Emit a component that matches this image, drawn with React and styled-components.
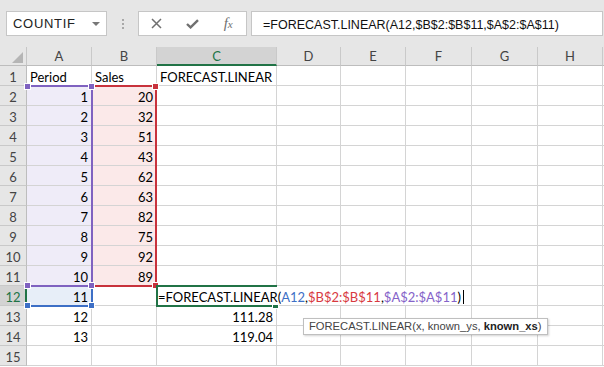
import React from "react";
import styled, { createGlobalStyle } from "styled-components";

const CELL_FONT = `Lato, "Liberation Sans", Arial, sans-serif`;
const UI_FONT = `"Liberation Sans", Arial, sans-serif`;

const GREEN = "#217346";
const PURPLE = "#7f62c0";
const RED = "#c8323c";
const BLUE = "#3d6fc6";

const GlobalStyle = createGlobalStyle`
  html, body {
    margin: 0;
    padding: 0;
    background: #fff;
  }
  body {
    font-family: ${UI_FONT};
  }
`;

const Window = styled.div`
  width: 604px;
  height: 367px;
  overflow: hidden;
  background: #fff;
`;

const Toolbar = styled.div`
  height: 47px;
  box-sizing: border-box;
  background: #e6e6e6;
  display: flex;
  align-items: center;
  padding: 0 1px 0 6px;
`;

const NameBox = styled.div`
  width: 101px;
  height: 25px;
  box-sizing: border-box;
  background: #fff;
  border: 1px solid #c6c6c6;
  display: flex;
  align-items: center;
  justify-content: space-between;
  padding: 0 6px 0 6px;
  font-size: 13px;
  letter-spacing: 0.7px;
  color: #222;
`;

const DropArrow = styled.span`
  width: 0;
  height: 0;
  border-left: 4px solid transparent;
  border-right: 4px solid transparent;
  border-top: 4px solid #777;
`;

const Grip = styled.div`
  width: 31px;
  display: flex;
  flex-direction: column;
  align-items: center;
  gap: 2px;

  span {
    width: 2px;
    height: 2px;
    background: #a8a8a8;
  }
`;

const ButtonGroup = styled.div`
  width: 109px;
  height: 25px;
  box-sizing: border-box;
  background: #fff;
  border: 1px solid #c6c6c6;
  display: flex;
`;

const BarButton = styled.div`
  flex: 1;
  display: flex;
  align-items: center;
  justify-content: center;
  color: #707070;
`;

const Fx = styled.span`
  font-family: "Liberation Serif", serif;
  font-style: italic;
  font-size: 15px;
  color: #707070;

  small {
    font-size: 11px;
  }
`;

const FormulaInput = styled.div`
  flex: 1;
  height: 25px;
  margin-left: 4px;
  box-sizing: border-box;
  background: #fff;
  border: 1px solid #c6c6c6;
  padding: 3px 0 0 11px;
  display: flex;
  align-items: center;
  font-size: 12.5px;
  color: #111;
`;

const Sheet = styled.div`
  position: relative;
  display: grid;
  grid-template-columns: 27px 65px 65px 120px 64px 65px 66px 66px 65px 1fr;
  grid-template-rows: 19px;
  grid-auto-rows: 20px;
  font-family: ${CELL_FONT};
  font-size: 13px;
`;

const Corner = styled.div`
  box-sizing: border-box;
  background: #e6e6e6;
  border-right: 1px solid #c6c6c6;
  border-bottom: 1px solid #bdbdbd;
  display: flex;
  justify-content: flex-end;
  align-items: flex-end;
  padding: 0 3px 2px 0;

  span {
    width: 0;
    height: 0;
    border-left: 11px solid transparent;
    border-bottom: 11px solid #b5b5b5;
  }
`;

const ColHeader = styled.div`
  box-sizing: border-box;
  background: ${(p) => (p.$active ? "#d3d3d3" : "#e6e6e6")};
  color: ${(p) => (p.$active ? GREEN : "#444")};
  border-right: 1px solid #c9c9c9;
  border-bottom: ${(p) => (p.$active ? `2px solid ${GREEN}` : "1px solid #bdbdbd")};
  display: flex;
  align-items: center;
  justify-content: center;
  padding-top: ${(p) => (p.$active ? "2px" : "1px")};
  line-height: 15px;
`;

const RowHeader = styled.div`
  box-sizing: border-box;
  background: ${(p) => (p.$active ? "#d3d3d3" : "#e6e6e6")};
  color: ${(p) => (p.$active ? GREEN : "#444")};
  border-right: ${(p) => (p.$active ? `2px solid ${GREEN}` : "1px solid #bdbdbd")};
  border-bottom: 1px solid #c9c9c9;
  display: flex;
  align-items: flex-end;
  justify-content: center;
  padding-left: ${(p) => (p.$active ? "1px" : "0")};
  line-height: 16px;
`;

const Cell = styled.div`
  box-sizing: border-box;
  background: ${(p) => p.$fill || "#fff"};
  border-right: 1px solid #d4d4d4;
  border-bottom: 1px solid #d4d4d4;
  display: flex;
  align-items: flex-end;
  justify-content: ${(p) => (p.$num ? "flex-end" : "flex-start")};
  padding: 0 3px;
  line-height: 16px;
  color: #000;
  white-space: nowrap;
`;

const Range = styled.div`
  position: absolute;
  box-sizing: border-box;
  left: ${(p) => p.$x}px;
  top: ${(p) => p.$y}px;
  width: ${(p) => p.$w}px;
  height: ${(p) => p.$h}px;
  border: 2px solid ${(p) => p.$color};
  border-left: ${(p) => (p.$openLeft ? "none" : `2px solid ${p.$color}`)};
  pointer-events: none;
`;

const Handle = styled.span`
  position: absolute;
  width: 5px;
  height: 5px;
  background: ${(p) => p.$color};
  box-shadow: 0 0 0 1px #fff;
  ${(p) => (p.$at.includes("t") ? "top: -3px;" : "bottom: -3px;")}
  ${(p) => (p.$at.includes("l") ? "left: -2px;" : "right: -3px;")}
`;

const EditBox = styled.div`
  position: absolute;
  left: 158px;
  top: 240px;
  height: 18px;
  background: #fff;
  display: flex;
  align-items: flex-end;
  line-height: 16px;
  padding-right: 2px;
  white-space: nowrap;
  color: #000;
`;

const Ref = styled.span`
  color: ${(p) => p.$color};
`;

const Caret = styled.span`
  width: 1px;
  height: 14px;
  margin: 0 0 1px 2px;
  background: #000;
`;

const Tooltip = styled.div`
  position: absolute;
  left: 303px;
  top: 271px;
  height: 17px;
  box-sizing: border-box;
  padding: 0 5px;
  background: #fff;
  border: 1px solid #bfbfbf;
  box-shadow: 1px 1px 2px rgba(0, 0, 0, 0.18);
  font-family: ${UI_FONT};
  font-size: 11.2px;
  line-height: 15px;
  color: #444;
  white-space: nowrap;

  b {
    color: #222;
  }
`;

const columns = ["A", "B", "C", "D", "E", "F", "G", "H"];
const sales = [20, 32, 51, 43, 62, 63, 82, 75, 92, 89];

const rows = Array.from({ length: 15 }, (_, i) => {
  const r = i + 1;
  const row = {};
  if (r === 1) {
    row.A = "Period";
    row.B = "Sales";
    row.C = "FORECAST.LINEAR";
  } else if (r <= 11) {
    row.A = r - 1;
    row.B = sales[r - 2];
  } else if (r <= 14) {
    row.A = r - 1;
  }
  if (r === 13) row.C = "111.28";
  if (r === 14) row.C = "119.04";
  return row;
});

const fillFor = (col, r) => {
  if (col === "A" && r >= 2 && r <= 11) return "#efecf8";
  if (col === "B" && r >= 2 && r <= 11) return "#fbe9e9";
  if (col === "A" && r === 12) return "#e7eef8";
  return null;
};

const XIcon = () => (
  <svg width="11" height="11" viewBox="0 0 11 11">
    <path d="M1 1 L10 10 M10 1 L1 10" stroke="#707070" strokeWidth="1.5" fill="none" />
  </svg>
);

const CheckIcon = () => (
  <svg width="13" height="10" viewBox="0 0 13 10">
    <path d="M1 5 L4.6 8.4 L12 1.2" stroke="#707070" strokeWidth="2.4" fill="none" />
  </svg>
);

export default function App() {
  return (
    <Window>
      <GlobalStyle />
      <Toolbar>
        <NameBox>
          COUNTIF
          <DropArrow />
        </NameBox>
        <Grip>
          <span />
          <span />
          <span />
        </Grip>
        <ButtonGroup>
          <BarButton>
            <XIcon />
          </BarButton>
          <BarButton>
            <CheckIcon />
          </BarButton>
          <BarButton>
            <Fx>
              f<small>x</small>
            </Fx>
          </BarButton>
        </ButtonGroup>
        <FormulaInput>=FORECAST.LINEAR(A12,$B$2:$B$11,$A$2:$A$11)</FormulaInput>
      </Toolbar>

      <Sheet>
        <Corner>
          <span />
        </Corner>
        {columns.map((c) => (
          <ColHeader key={c} $active={c === "C"}>
            {c}
          </ColHeader>
        ))}
        <ColHeader />

        {rows.map((row, i) => {
          const r = i + 1;
          return (
            <React.Fragment key={r}>
              <RowHeader $active={r === 12}>{r}</RowHeader>
              {columns.map((c) => (
                <Cell key={c} $fill={fillFor(c, r)} $num={typeof row[c] === "number" || r > 12}>
                  {row[c]}
                </Cell>
              ))}
              <Cell />
            </React.Fragment>
          );
        })}

        <Range $x={92} $y={38} $w={65} $h={202} $color={RED} $openLeft>
          <Handle $at="tr" $color={RED} />
          <Handle $at="br" $color={RED} />
        </Range>
        <Range $x={27} $y={238} $w={66} $h={22} $color={BLUE} $openLeft>
          <Handle $at="bl" $color={BLUE} />
          <Handle $at="br" $color={BLUE} />
        </Range>
        <Range $x={27} $y={38} $w={66} $h={202} $color={PURPLE} $openLeft>
          <Handle $at="tl" $color={PURPLE} />
          <Handle $at="tr" $color={PURPLE} />
          <Handle $at="bl" $color={PURPLE} />
          <Handle $at="br" $color={PURPLE} />
        </Range>
        <Range $x={156} $y={238} $w={121} $h={22} $color={GREEN}>
          <Handle $at="br" $color={GREEN} />
        </Range>

        <EditBox>
          =FORECAST.LINEAR(
          <Ref $color={BLUE}>A12</Ref>,<Ref $color="#d8393f">$B$2:$B$11</Ref>,
          <Ref $color="#8563c9">$A$2:$A$11</Ref>)
          <Caret />
        </EditBox>

        <Tooltip>
          FORECAST.LINEAR(x, known_ys, <b>known_xs</b>)
        </Tooltip>
      </Sheet>
    </Window>
  );
}
